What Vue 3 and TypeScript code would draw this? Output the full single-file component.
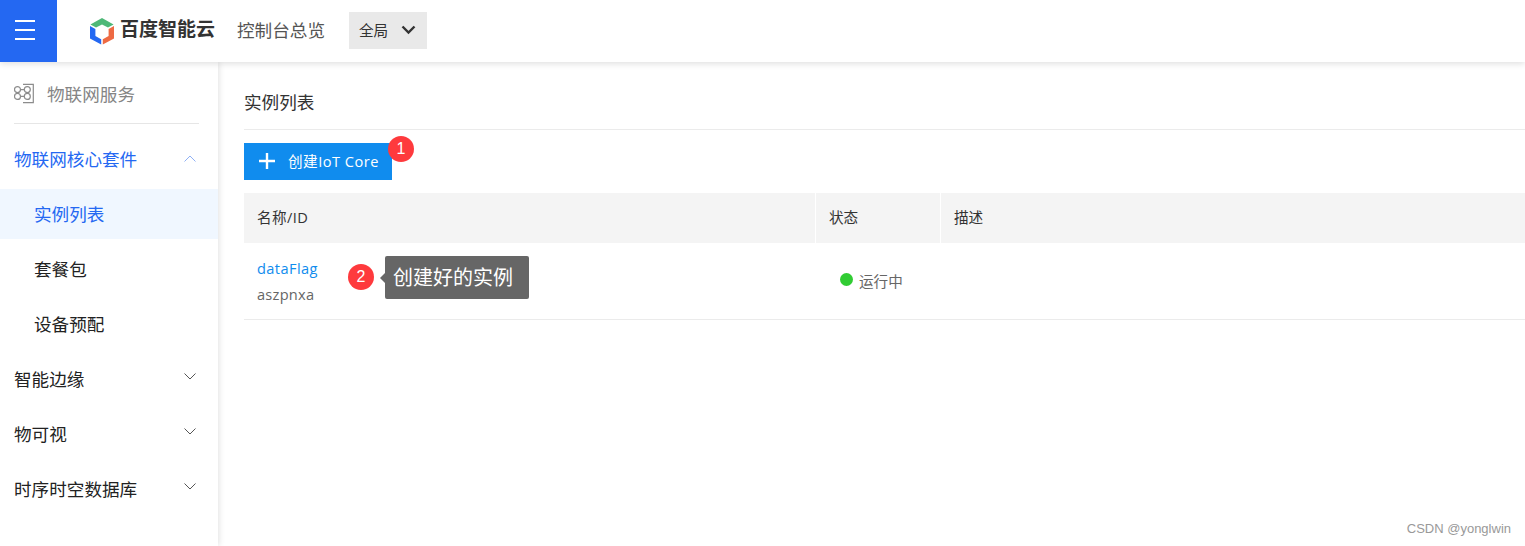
<script setup lang="ts">
interface MenuGroup {
  label: string
  open?: boolean
  children?: { label: string; active?: boolean }[]
}

const menu: MenuGroup[] = [
  {
    label: '物联网核心套件',
    open: true,
    children: [{ label: '实例列表', active: true }, { label: '套餐包' }, { label: '设备预配' }]
  },
  { label: '智能边缘' },
  { label: '物可视' },
  { label: '时序时空数据库' }
]
</script>

<template>
  <div class="page">
    <header class="topbar">
      <div class="burger">
        <span></span>
        <span></span>
        <span></span>
      </div>
      <div class="logo">
        <svg width="26" height="28" viewBox="0 0 26 28">
          <path d="M13 1 L24.6 7.4 L19 10.6 L13 7.4 L7 10.6 L1.4 7.4 Z" fill="#4fb878" />
          <path d="M1 9 L6.4 12 L6.4 19 L12.2 22.2 L12.2 27.6 L1 21.4 Z" fill="#2468f2" />
          <path d="M25 9 L19.6 12 L19.6 19 L13.8 22.2 L13.8 27.6 L25 21.4 Z" fill="#ee6a43" />
        </svg>
        <span class="logo-text">百度智能云</span>
      </div>
      <span class="overview">控制台总览</span>
      <div class="region">
        <span>全局</span>
        <svg width="15" height="10" viewBox="0 0 15 10">
          <path d="M1.5 1.5 L7.5 7.5 L13.5 1.5" fill="none" stroke="#333" stroke-width="2.4" />
        </svg>
      </div>
    </header>

    <div class="body">
      <aside class="sidebar">
        <div class="service">
          <svg width="21" height="21" viewBox="0 0 21 21" fill="none" stroke="#8c8c8c" stroke-width="1.2">
            <path d="M9 1.3 H19.3 V19.7 H9" />
            <circle cx="13.3" cy="6.6" r="3" />
            <circle cx="13.3" cy="13.4" r="3" />
            <circle cx="3.5" cy="6.6" r="3" />
            <circle cx="3.5" cy="13.4" r="3" />
            <path d="M6.5 6.6 H10.3 M6.5 13.4 H10.3" />
          </svg>
          <span>物联网服务</span>
        </div>
        <nav class="menu">
          <template v-for="group in menu" :key="group.label">
            <div class="menu-item" :class="{ 'is-open': group.open }">
              <span>{{ group.label }}</span>
              <svg class="arrow" width="12" height="7" viewBox="0 0 12 7">
                <path v-if="group.open" d="M0.5 6.5 L6 1 L11.5 6.5" fill="none" stroke="#8fb0f5" stroke-width="1" />
                <path v-else d="M0.5 0.5 L6 6 L11.5 0.5" fill="none" stroke="#555" stroke-width="1" />
              </svg>
            </div>
            <div
              v-for="child in group.children"
              :key="child.label"
              class="menu-child"
              :class="{ active: child.active }"
            >
              {{ child.label }}
            </div>
          </template>
        </nav>
      </aside>

      <main class="content">
        <h1 class="title">实例列表</h1>
        <div class="toolbar">
          <button class="create" type="button">
            <svg width="18" height="18" viewBox="0 0 18 18">
              <path d="M9 1 V17 M1 9 H17" stroke="#fff" stroke-width="2.4" />
            </svg>
            <span>创建IoT Core</span>
            <i class="badge badge-one">1</i>
          </button>
        </div>

        <div class="table">
          <div class="row head">
            <div class="cell first">名称/ID</div>
            <div class="cell">状态</div>
            <div class="cell">描述</div>
          </div>
          <div class="row item">
            <div class="cell name-cell">
              <a class="name">dataFlag</a>
              <span class="id">aszpnxa</span>
              <i class="badge badge-two">2</i>
              <div class="tip">创建好的实例</div>
            </div>
            <div class="cell status">
              <i class="dot"></i>
              <span>运行中</span>
            </div>
            <div class="cell"></div>
          </div>
        </div>
      </main>
    </div>

    <div class="watermark">CSDN @yonglwin</div>
  </div>
</template>

<style>
html,
body {
  margin: 0;
  overflow: hidden;
}
</style>

<style scoped>
.page {
  position: relative;
  width: 1525px;
  height: 546px;
  overflow: hidden;
  background: #fff;
  font-family: "Open Sans", "Noto Sans CJK SC", sans-serif;
  color: #333;
}

.topbar {
  position: relative;
  z-index: 2;
  display: flex;
  align-items: center;
  height: 62px;
  background: #fff;
  box-shadow: 0 2px 6px rgba(0, 0, 0, 0.12);
}

.burger {
  display: flex;
  flex-direction: column;
  justify-content: center;
  gap: 7px;
  width: 57px;
  height: 62px;
  box-sizing: border-box;
  padding: 0 0 2px 15px;
  background: #2468f2;
}

.burger span {
  display: block;
  width: 20px;
  height: 2px;
  background: #fff;
}

.logo {
  display: flex;
  align-items: center;
  gap: 5px;
  margin-left: 32px;
  width: 148px;
}

.logo-text {
  margin-top: -3px;
  font-size: 19px;
  font-weight: 700;
  color: #333;
  line-height: 1;
  white-space: nowrap;
}

.overview {
  margin-top: -3px;
  font-size: 17.6px;
  color: #555;
}

.region {
  display: flex;
  align-items: center;
  justify-content: space-between;
  width: 78px;
  height: 37px;
  box-sizing: border-box;
  margin-left: 24px;
  margin-top: -1px;
  padding: 0 11px 2px 10px;
  background: #e9e9e9;
  font-size: 14.6px;
  color: #333;
}

.body {
  display: flex;
  height: 484px;
}

.sidebar {
  width: 218px;
  flex-shrink: 0;
  box-sizing: border-box;
  background: #fff;
  box-shadow: 1px 0 6px rgba(0, 0, 0, 0.12);
}

.service {
  display: flex;
  align-items: center;
  gap: 12px;
  height: 62px;
  box-sizing: border-box;
  margin: 0 19px 0 14px;
  padding-top: 2px;
  border-bottom: 1px solid #e6e6e6;
  font-size: 17.6px;
  color: #858585;
}

.menu {
  display: flex;
  flex-direction: column;
  gap: 5px;
  padding-top: 10px;
}

.menu-item,
.menu-child {
  display: flex;
  align-items: center;
  height: 50px;
  box-sizing: border-box;
  padding-bottom: 2px;
  font-size: 17.6px;
  color: #222;
}

.menu-item {
  justify-content: space-between;
  padding-right: 22px;
  padding-left: 14px;
}

.menu-item .arrow {
  margin-top: -4px;
}

.menu-item.is-open {
  color: #2468f2;
}

.menu-item.is-open .arrow {
  margin-top: 0;
}

.menu-child {
  padding-left: 34px;
}

.menu-child.active {
  background: #f0f7ff;
  color: #2468f2;
}

.content {
  flex: 1;
  min-width: 0;
  padding-left: 26px;
}

.title {
  margin: 0;
  height: 68px;
  box-sizing: border-box;
  padding-top: 24px;
  border-bottom: 1px solid #ebebeb;
  font-size: 17.6px;
  line-height: 32px;
  font-weight: 400;
  color: #333;
}

.toolbar {
  padding-top: 13px;
  height: 63px;
  box-sizing: border-box;
}

.create {
  position: relative;
  display: flex;
  align-items: center;
  gap: 12px;
  width: 148px;
  height: 37px;
  padding: 0 0 2px 14px;
  border: 0;
  background: #108cee;
  color: #fff;
  font-family: inherit;
  font-size: 14.6px;
  letter-spacing: 0.5px;
}

.badge {
  position: absolute;
  display: flex;
  align-items: center;
  justify-content: center;
  width: 26px;
  height: 26px;
  border-radius: 50%;
  background: #fe3a3d;
  color: #fff;
  font-family: "Liberation Sans", sans-serif;
  font-size: 16px;
  font-style: normal;
  letter-spacing: 0;
}

.badge-one {
  top: -7px;
  right: -22px;
}

.badge-two {
  top: 21px;
  left: 104px;
}

.table {
  font-size: 14.6px;
}

.row {
  display: grid;
  grid-template-columns: 571px 124px 1fr;
  column-gap: 1px;
}

.head {
  height: 50px;
}

.head .cell {
  display: flex;
  align-items: center;
  padding: 0 0 4px 13px;
  background: #f4f4f4;
  color: #333;
}

.head .first {
  letter-spacing: 0.4px;
}

.item {
  height: 77px;
  box-sizing: border-box;
  border-bottom: 1px solid #ebebeb;
}

.name-cell {
  position: relative;
  display: flex;
  flex-direction: column;
  padding: 12px 0 0 13px;
  line-height: 26px;
}

.name {
  color: #108cee;
  letter-spacing: 0.4px;
}

.id {
  color: #666;
  letter-spacing: 0.25px;
}

.tip {
  position: absolute;
  top: 13px;
  left: 141px;
  width: 144px;
  height: 43px;
  box-sizing: border-box;
  padding-left: 8px;
  border-radius: 2px;
  background: #666;
  color: #fff;
  font-size: 20px;
  line-height: 43px;
}

.tip::before {
  content: "";
  position: absolute;
  top: 17px;
  left: -5px;
  border-top: 5px solid transparent;
  border-bottom: 5px solid transparent;
  border-right: 5px solid #666;
}

.status {
  display: flex;
  align-items: center;
  gap: 6px;
  padding: 0 0 2px 24px;
  color: #666;
}

.dot {
  width: 13px;
  height: 13px;
  margin-top: -1px;
  border-radius: 50%;
  background: #31cc33;
}

.watermark {
  position: absolute;
  right: 14px;
  bottom: 8px;
  font-family: "Liberation Sans", sans-serif;
  font-size: 13px;
  line-height: 18px;
  color: #999;
}
</style>
